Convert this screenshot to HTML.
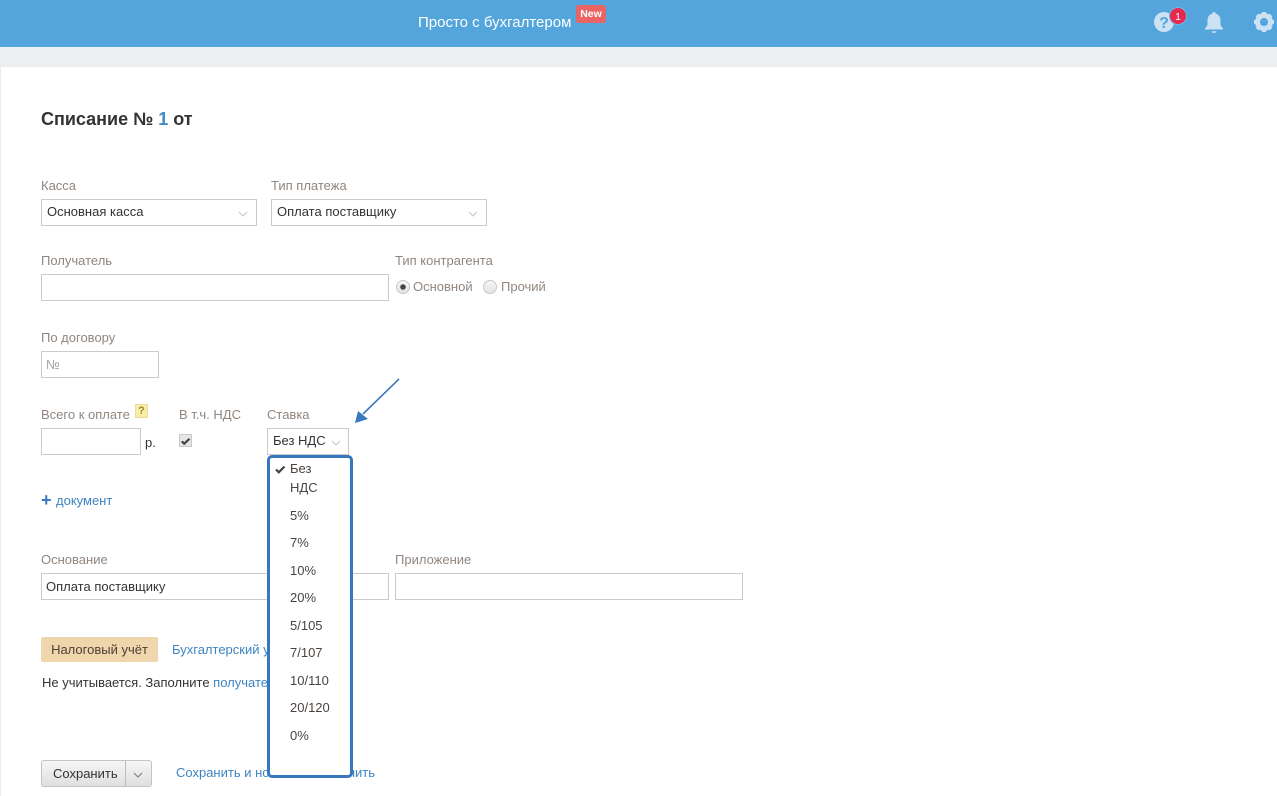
<!DOCTYPE html>
<html lang="ru"><head><meta charset="utf-8">
<style>
html,body{margin:0;padding:0;width:1277px;height:796px;overflow:hidden;background:#fff;font-family:"Liberation Sans",Arial,sans-serif;font-size:13px;color:#333}
.a{position:absolute;white-space:nowrap}
.lbl{color:#90867f;font-size:13px;line-height:16px}
.box{position:absolute;box-sizing:border-box;border:1px solid #cbcbcb;background:#fff}
.val{color:#333;font-size:13px;line-height:16px}
.lnk{color:#3f84c2;font-size:13px;line-height:16px}
.it{position:absolute;left:290px;font-size:13px;line-height:16px;color:#4a4440}
</style></head><body>
<div class="a" style="left:0;top:0;width:1277px;height:47px;background:#53a5dc"></div>
<div class="a" style="left:0;top:47px;width:1277px;height:20px;background:#ebeff2"></div>
<div class="a" style="left:0;top:67px;width:1px;height:729px;background:#ebeff2"></div>
<div class="a" style="left:418px;top:14px;font-size:15px;line-height:18px;color:#fff">Просто с бухгалтером</div>
<div class="a" style="left:576px;top:5px;width:30px;height:18px;background:#e96565;border-radius:3px;color:#fff;font-size:10.5px;font-weight:bold;line-height:18px;text-align:center">New</div>
<svg class="a" style="left:1150px;top:4px" width="127" height="34" viewBox="0 0 127 34">
<circle cx="14" cy="18" r="10" fill="#cbe2f5"/>
<text x="14" y="24" font-family="Liberation Sans" font-size="16" font-weight="bold" fill="#53a5dc" text-anchor="middle">?</text>
<circle cx="28" cy="12" r="8.5" fill="#e6294f" stroke="#76b5e2" stroke-width="1"/>
<text x="28" y="16" font-family="Liberation Sans" font-size="10" fill="#fff" text-anchor="middle">1</text>
<path d="M64 8c1 0 1.700.7 1.700 1.600 3.300.9 4.800 3.500 4.800 7v3.400c0 1.800 1.200 3 2.500 4.200v1.300H55v-1.300c1.300-1.200 2.500-2.400 2.500-4.200v-3.400c0-3.500 1.500-6.100 4.800-7C62.300 8.700 63 8 64 8zM61.500 27.300h5c-.3 1-1.200 1.700-2.500 1.700s-2.200-.7-2.500-1.700z" fill="#cbe2f5"/>
<circle cx="114" cy="18" r="6.500" fill="none" stroke="#cbe2f5" stroke-width="5"/>
<path d="M114 8v20M104 18h20M107 11l14 14M121 11l-14 14" stroke="#cbe2f5" stroke-width="4"/>
<circle cx="114" cy="18" r="4" fill="#53a5dc"/>
</svg>

<div class="a" style="left:41px;top:108px;font-size:18px;line-height:22px;font-weight:bold;color:#333">Списание № <span style="color:#3f8ac9">1</span> от</div>

<div class="a lbl" style="left:41px;top:178px">Касса</div>
<div class="box" style="left:41px;top:199px;width:216px;height:27px"></div>
<div class="a val" style="left:47px;top:204px">Основная касса</div>
<svg class="a" style="left:238px;top:210px" width="10" height="8"><path d="M1 2l4 4 4-4" fill="none" stroke="#c4c4c4" stroke-width="1"/></svg>

<div class="a lbl" style="left:271px;top:178px">Тип платежа</div>
<div class="box" style="left:271px;top:199px;width:216px;height:27px"></div>
<div class="a val" style="left:277px;top:204px">Оплата поставщику</div>
<svg class="a" style="left:468px;top:210px" width="10" height="8"><path d="M1 2l4 4 4-4" fill="none" stroke="#c4c4c4" stroke-width="1"/></svg>

<div class="a lbl" style="left:41px;top:253px">Получатель</div>
<div class="box" style="left:41px;top:274px;width:348px;height:27px"></div>
<div class="a lbl" style="left:395px;top:253px">Тип контрагента</div>
<svg class="a" style="left:395px;top:279px" width="16" height="16"><defs><linearGradient id="g" x1="0" y1="0" x2="0" y2="1"><stop offset="0" stop-color="#f6f6f6"/><stop offset="1" stop-color="#e2e2e2"/></linearGradient></defs><circle cx="8" cy="8" r="6.500" fill="url(#g)" stroke="#c8c8c8"/><circle cx="8" cy="8" r="2.800" fill="#444"/></svg>
<div class="a lbl" style="left:413px;top:279px">Основной</div>
<svg class="a" style="left:482px;top:279px" width="16" height="16"><circle cx="8" cy="8" r="6.500" fill="url(#g)" stroke="#c8c8c8"/></svg>
<div class="a lbl" style="left:501px;top:279px">Прочий</div>

<div class="a lbl" style="left:41px;top:330px">По договору</div>
<div class="box" style="left:41px;top:351px;width:118px;height:27px"></div>
<div class="a" style="left:46px;top:357px;color:#a5a5a5;font-size:13px;line-height:16px">№</div>

<div class="a lbl" style="left:41px;top:407px">Всего к оплате</div>
<div class="a" style="left:135px;top:404px;width:13px;height:14px;box-sizing:border-box;background:#f8eeaa;border:1px solid #e8dc96;color:#a08a2c;font-size:11px;font-weight:bold;line-height:12px;text-align:center">?</div>
<div class="a lbl" style="left:179px;top:407px">В т.ч. НДС</div>
<div class="a lbl" style="left:267px;top:407px">Ставка</div>
<div class="box" style="left:41px;top:428px;width:100px;height:27px"></div>
<div class="a val" style="left:145px;top:435px">р.</div>
<div class="a" style="left:179px;top:434px;width:13px;height:13px;box-sizing:border-box;background:#e6e6e6;border:1px solid #c8c8c8"></div>
<svg class="a" style="left:180px;top:435px" width="11" height="11"><path d="M1.800 6.300l2.400 2.400L9.500 3.800" fill="none" stroke="#444" stroke-width="2.200"/></svg>
<div class="box" style="left:267px;top:428px;width:82px;height:27px"></div>
<div class="a val" style="left:273px;top:433px">Без НДС</div>
<svg class="a" style="left:331px;top:439px" width="10" height="8"><path d="M1 2l4 4 4-4" fill="none" stroke="#c4c4c4" stroke-width="1"/></svg>

<svg class="a" style="left:350px;top:375px" width="55" height="55"><path d="M49 4L13 39" stroke="#3b78bd" stroke-width="1.600" fill="none"/><path d="M5 48l3-12 10 8z" fill="#3b78bd"/></svg>

<div class="a" style="left:41px;top:490px;color:#3b78bd;font-size:18px;font-weight:bold;line-height:20px">+</div>
<div class="a lnk" style="left:56px;top:493px">документ</div>

<div class="a lbl" style="left:41px;top:552px">Основание</div>
<div class="box" style="left:41px;top:573px;width:348px;height:27px"></div>
<div class="a val" style="left:46px;top:579px">Оплата поставщику</div>
<div class="a lbl" style="left:395px;top:552px">Приложение</div>
<div class="box" style="left:395px;top:573px;width:348px;height:27px"></div>

<div class="a" style="left:41px;top:637px;width:117px;height:25px;background:#f0d6ac;border-radius:2px;color:#4a3f35;font-size:13px;line-height:25px;text-align:center">Налоговый учёт</div>
<div class="a lnk" style="left:172px;top:642px">Бухгалтерский учёт</div>
<div class="a val" style="left:42px;top:675px">Не учитывается. Заполните <span style="color:#3f84c2">получателя</span></div>

<div class="a" style="left:41px;top:760px;width:111px;height:27px;box-sizing:border-box;border:1px solid #c4c4c4;border-radius:3px;background:linear-gradient(#f6f6f6,#dfdfdf)"></div>
<div class="a" style="left:125px;top:761px;width:1px;height:25px;background:#bcbcbc"></div>
<div class="a val" style="left:53px;top:766px">Сохранить</div>
<svg class="a" style="left:133px;top:771px" width="10" height="8"><path d="M1 2l4 4 4-4" fill="none" stroke="#777" stroke-width="1"/></svg>
<div class="a lnk" style="left:176px;top:765px">Сохранить и новый</div>
<div class="a lnk" style="right:902px;top:765px">Отменить</div>

<div class="a" style="left:267px;top:455px;width:86px;height:323px;box-sizing:border-box;border:3px solid #3777bd;border-radius:5px;background:#fff"></div>
<svg class="a" style="left:275px;top:464px" width="11" height="11"><path d="M1 5.500l2.800 2.800L9.500 2.500" fill="none" stroke="#444" stroke-width="2.200"/></svg>
<div class="it" style="top:459px;line-height:19px">Без<br>НДС</div>
<div class="it" style="top:508px">5%</div>
<div class="it" style="top:535px">7%</div>
<div class="it" style="top:563px">10%</div>
<div class="it" style="top:590px">20%</div>
<div class="it" style="top:618px">5/105</div>
<div class="it" style="top:645px">7/107</div>
<div class="it" style="top:673px">10/110</div>
<div class="it" style="top:700px">20/120</div>
<div class="it" style="top:728px">0%</div>
</body></html>
